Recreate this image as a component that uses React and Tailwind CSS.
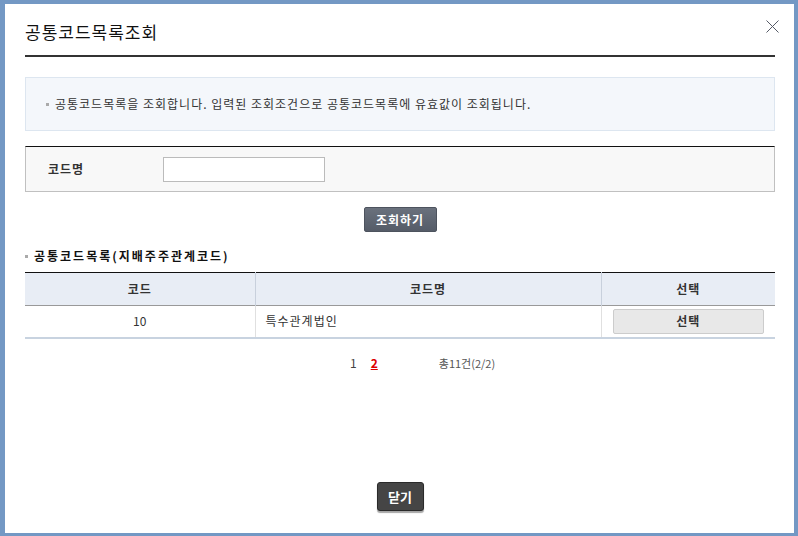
import React from "react";

export default function App() {
  return (
    <div className="w-[798px] h-[536px] bg-[#7398c4] pl-[5px] pt-[4px] pr-[4px] pb-[3px] font-['Noto_Sans_CJK_KR',sans-serif] text-[#333]">
      <div className="relative h-full bg-white flex flex-col pl-[20px] pr-[19px]">
        {/* close */}
        <button className="absolute right-[15px] top-[16px] w-[13px] h-[13px]">
          <svg width="13" height="13" viewBox="0 0 13 13">
            <path d="M0.5 0.5 L12.5 12.5 M12.5 0.5 L0.5 12.5" stroke="#555a66" strokeWidth="1" fill="none" />
          </svg>
        </button>

        {/* Header */}
        <div className="pt-[16px] pb-[11px] border-b-2 border-[#333]">
          <h1 className="text-[17px] leading-[24px] text-[#111] font-normal tracking-[1px]">공통코드목록조회</h1>
        </div>

        {/* Info */}
        <div className="mt-[20px] h-[54px] bg-[#f4f7fb] border border-[#dde6f0] flex items-center pl-[20px]">
          <span className="w-[3px] h-[3px] bg-[#aaa] mr-[6px]" />
          <p className="text-[12px] leading-[16px] text-[#333] tracking-[1px]">
            공통코드목록을 조회합니다. 입력된 조회조건으로 공통코드목록에 유효값이 조회됩니다.
          </p>
        </div>

        {/* Search */}
        <div className="mt-[15px] h-[46px] bg-[#f8f8f8] border border-[#c0c0c0] border-t-[#111] flex items-center">
          <label className="w-[137px] pl-[22px] text-[12px] font-bold text-[#333] tracking-[1px]">코드명</label>
          <input type="text" className="w-[162px] h-[25px] bg-white border border-[#bbb] outline-none" />
        </div>

        <div className="mt-[15px] flex justify-center">
          <button className="w-[73px] h-[25px] rounded-[2px] bg-gradient-to-b from-[#6a717d] to-[#555c68] border border-[#4d535e] text-white text-[12px] font-bold tracking-[1px] leading-none">
            조회하기
          </button>
        </div>

        {/* Section title */}
        <div className="mt-[16px] flex items-center">
          <span className="w-[3px] h-[3px] bg-[#aaa] mr-[6px]" />
          <h2 className="text-[12px] leading-[16px] font-bold text-[#111] tracking-[2px]">공통코드목록(지배주주관계코드)</h2>
        </div>

        {/* Table */}
        <table className="mt-[8px] w-full border-collapse text-[12px]">
          <thead>
            <tr className="h-[33px] bg-[#e8edf5] border-t border-t-[#111] border-b border-b-[#999]">
              <th className="w-[230px] font-bold text-[#333] border-r border-[#c8d0dc] tracking-[1px]">코드</th>
              <th className="w-[346px] font-bold text-[#333] border-r border-[#c8d0dc] tracking-[1px]">코드명</th>
              <th className="font-bold text-[#333] tracking-[1px]">선택</th>
            </tr>
          </thead>
          <tbody>
            <tr className="h-[32px] border-b-2 border-[#c8d3e0]">
              <td className="text-center border-r border-[#e0e0e0]">10</td>
              <td className="pl-[10px] border-r border-[#e0e0e0] tracking-[1px]">특수관계법인</td>
              <td className="text-center">
                <button className="w-[151px] h-[25px] bg-[#e8e8e8] border border-[#ccc] rounded-[2px] text-[12px] font-bold text-[#333] tracking-[1px]">
                  선택
                </button>
              </td>
            </tr>
          </tbody>
        </table>

        {/* Paging */}
        <div className="mt-[16px] flex items-center pl-[325px] text-[12px] leading-[16px]">
          <span className="text-[#444]">1</span>
          <span className="ml-[14px] font-bold text-[#d00] underline">2</span>
          <span className="ml-[61px] text-[11px] text-[#555]">총11건(2/2)</span>
        </div>

        <div className="flex-1" />

        <div className="mb-[22px] flex justify-center">
          <button className="w-[47px] h-[29px] rounded-[3px] bg-[#454545] border border-[#2a2a2a] shadow-[0_2px_1px_rgba(0,0,0,0.35)] text-white text-[13px] font-bold leading-none">
            닫기
          </button>
        </div>
      </div>
    </div>
  );
}
